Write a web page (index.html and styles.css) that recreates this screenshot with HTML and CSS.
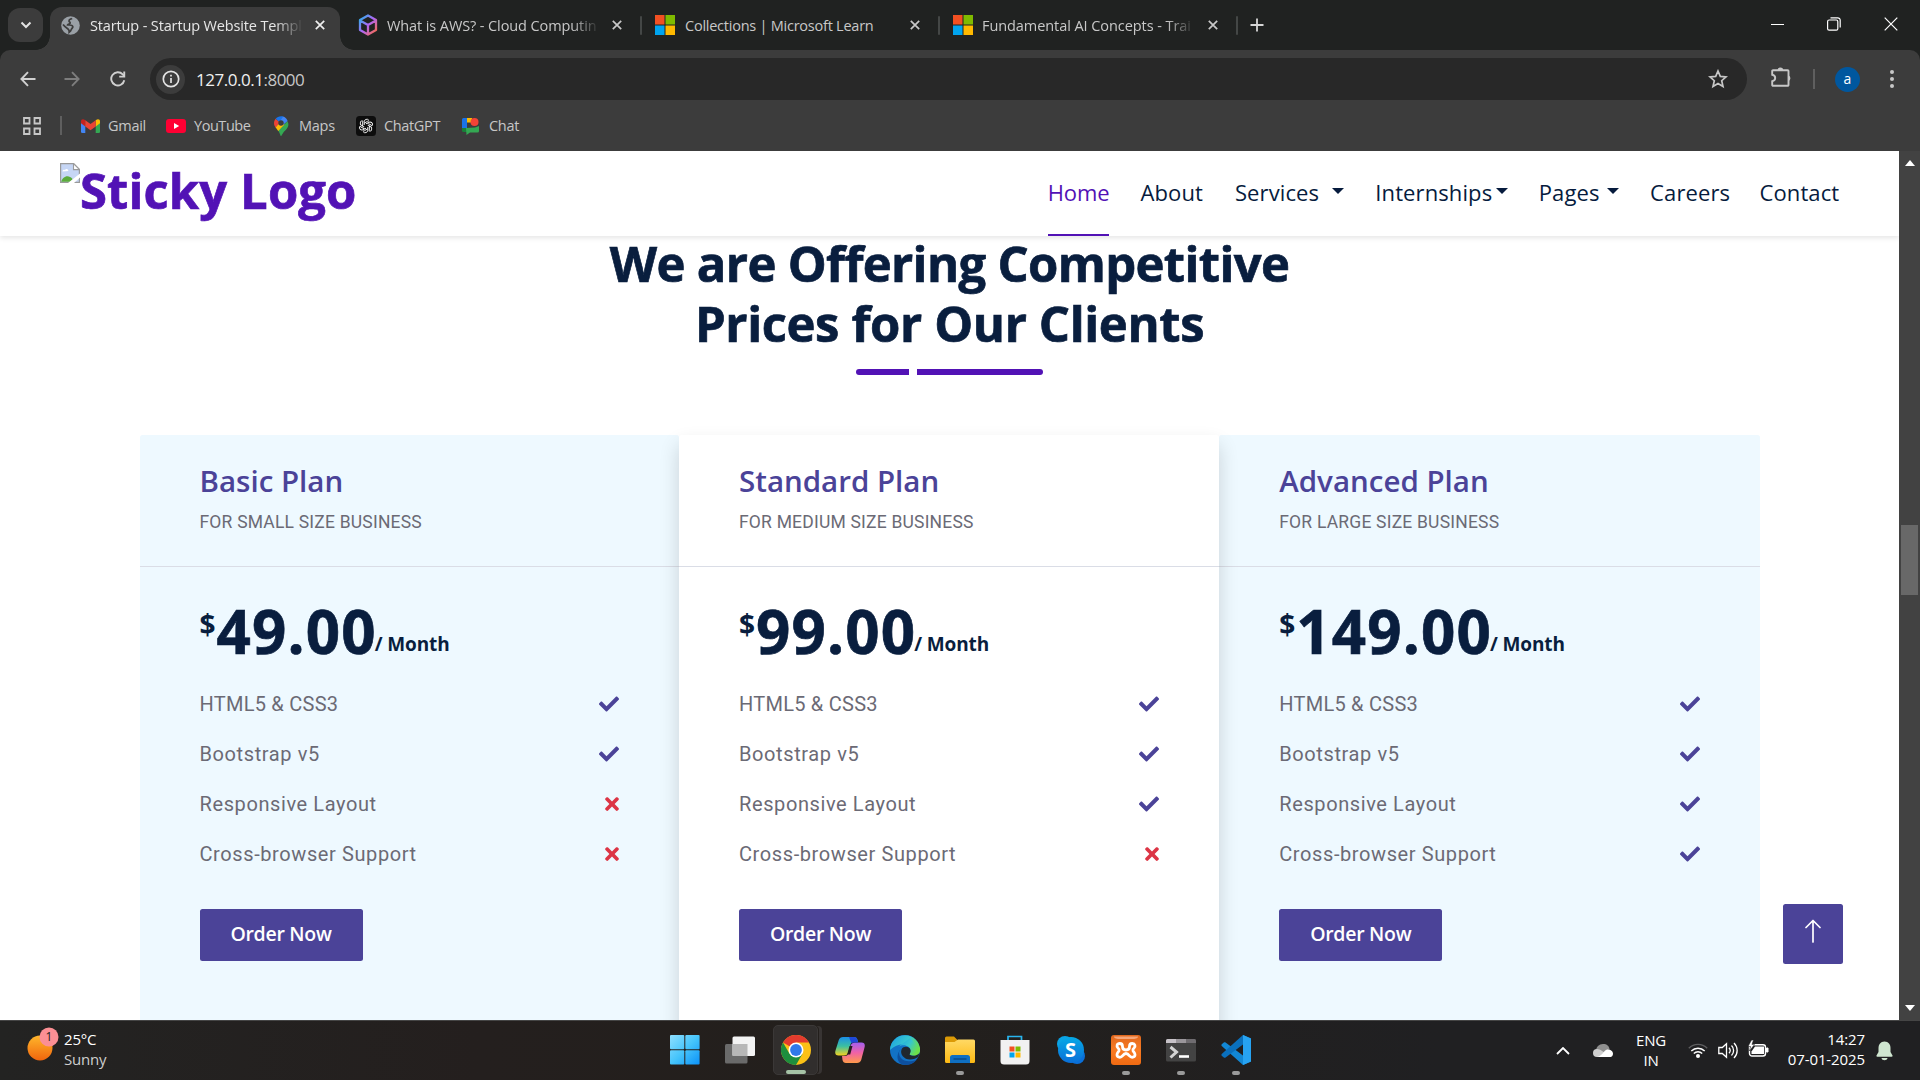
FILE: index.html
```
<!DOCTYPE html>
<html lang="en">
<head>
<meta charset="utf-8">
<title>Startup - Startup Website Template</title>
<link rel="stylesheet" href="styles.css">
</head>
<body>
<svg class="defs" width="0" height="0" aria-hidden="true">
  <defs>
    <linearGradient id="gAws" x1="0" y1="0" x2="1" y2="1"><stop offset="0" stop-color="#1fb6e8"/><stop offset=".5" stop-color="#b066f5"/><stop offset="1" stop-color="#ff6a3d"/></linearGradient>
    <linearGradient id="gWin" x1="0" y1="0" x2="30" y2="30" gradientUnits="userSpaceOnUse"><stop offset="0" stop-color="#8fdfff"/><stop offset=".5" stop-color="#45c4fb"/><stop offset="1" stop-color="#0a90f8"/></linearGradient>
    <linearGradient id="gEdgeTop" x1="0" y1="0" x2="1" y2=".5"><stop offset="0" stop-color="#1b9de2"/><stop offset=".55" stop-color="#36c6d0"/><stop offset="1" stop-color="#6be04a"/></linearGradient>
    <linearGradient id="gFolder" x1="0" y1="0" x2="0" y2="1"><stop offset="0" stop-color="#ffd965"/><stop offset="1" stop-color="#fdb913"/></linearGradient>
    <linearGradient id="gCopA" x1="0" y1="0" x2="0" y2="1"><stop offset="0" stop-color="#1a8fe8"/><stop offset=".5" stop-color="#3cc0a0"/><stop offset="1" stop-color="#f4d21f"/></linearGradient>
    <linearGradient id="gCopB" x1="0" y1="0" x2="0" y2="1"><stop offset="0" stop-color="#a25ff0"/><stop offset=".5" stop-color="#f062a6"/><stop offset="1" stop-color="#ff9a4a"/></linearGradient>
    <linearGradient id="gSky" x1="0" y1="0" x2="0" y2="1"><stop offset="0" stop-color="#06a9e6"/><stop offset="1" stop-color="#0a6fd8"/></linearGradient>
    <linearGradient id="gXam" x1="0" y1="0" x2="0" y2="1"><stop offset="0" stop-color="#e0671d"/><stop offset=".5" stop-color="#f97b23"/><stop offset="1" stop-color="#ef6a12"/></linearGradient>
    <linearGradient id="gSun" x1="0" y1="0" x2="0" y2="1"><stop offset="0" stop-color="#ffb72b"/><stop offset="1" stop-color="#f0650d"/></linearGradient>
    <symbol id="check" viewBox="0 0 512 512"><path d="M173.898 439.404l-166.4-166.4c-9.997-9.997-9.997-26.206 0-36.204l36.203-36.204c9.997-9.998 26.207-9.998 36.204 0L192 312.69 432.095 72.596c9.997-9.997 26.207-9.997 36.204 0l36.203 36.204c9.997 9.997 9.997 26.206 0 36.204l-294.4 294.401c-9.998 9.997-26.207 9.997-36.204-.001z"/></symbol>
    <symbol id="times" viewBox="0 0 352 512"><path d="M242.72 256l100.07-100.07c12.28-12.28 12.28-32.19 0-44.48l-22.24-22.24c-12.28-12.28-32.19-12.28-44.48 0L176 189.28 75.93 89.21c-12.28-12.28-32.19-12.28-44.48 0L9.21 111.45c-12.28 12.28-12.28 32.19 0 44.48L109.28 256 9.21 356.07c-12.28 12.28-12.28 32.19 0 44.48l22.24 22.24c12.28 12.28 32.2 12.28 44.48 0L176 322.72l100.07 100.07c12.28 12.28 32.2 12.28 44.48 0l22.24-22.24c12.28-12.28 12.28-32.19 0-44.48L242.72 256z"/></symbol>
    <symbol id="close" viewBox="0 0 10 10"><path d="M.8 .8L9.2 9.2M9.2 .8L.8 9.2" stroke="currentColor" stroke-width="1.7" fill="none"/></symbol>
    <symbol id="ms" viewBox="0 0 20 20"><path fill="#f25022" d="M0 0h9.5v9.5H0z"/><path fill="#7fba00" d="M10.5 0H20v9.5h-9.500z"/><path fill="#00a4ef" d="M0 10.500h9.500V20H0z"/><path fill="#ffb900" d="M10.500 10.500H20V20h-9.500z"/></symbol>
  </defs>
</svg>

<header class="browser">
  <div class="tabbar">
    <button class="tab-search"><svg width="12" height="8" viewBox="0 0 12 8"><path d="M1.500 1.500L6 6l4.500-4.500" fill="none" stroke="#e3e3e3" stroke-width="2"/></svg></button>
    <div class="tab tab-active">
      <svg class="fav" width="19" height="19" viewBox="0 0 19 19"><circle cx="9.500" cy="9.500" r="9.300" fill="#9aa0a6"/><path d="M11 2.300c-1 1-3 .8-3 2.600 0 1.300 1.200 1 1.200 2 0 1.200-2 .8-2.600 2 1.500.3 4.600-.4 5.200 1.500.4 1.600-1.300 2-1.600 3.300-.2 1.200-.9 2-2 2.600.3-1.700-.2-2.600-1.400-3.500C5 11.500 3.500 10.500 2 8.500" fill="none" stroke="#3c3c3c" stroke-width="1.700"/></svg>
      <span class="tab-title t1">Startup - Startup Website Templ</span>
      <svg class="x" width="10" height="10"><use href="#close"/></svg>
    </div>
    <div class="tab tab-aws">
      <svg class="fav" width="20" height="22" viewBox="0 0 20 22"><path d="M10 1.500l8 4.500v10l-8 4.500L2 16V6zM2 6.500l8 4.500 8-4.500M10 11v9" fill="none" stroke="url(#gAws)" stroke-width="2.300" stroke-linejoin="round"/></svg>
      <span class="tab-title t2">What is AWS? - Cloud Computin</span>
      <svg class="x" width="10" height="10"><use href="#close"/></svg>
    </div>
    <div class="tab tab-sep">
      <svg class="fav" width="20" height="20"><use href="#ms"/></svg>
      <span class="tab-title t3">Collections | Microsoft Learn</span>
      <svg class="x" width="10" height="10"><use href="#close"/></svg>
    </div>
    <div class="tab tab-sep">
      <svg class="fav" width="20" height="20"><use href="#ms"/></svg>
      <span class="tab-title t4">Fundamental AI Concepts - Trai</span>
      <svg class="x" width="10" height="10"><use href="#close"/></svg>
    </div>
    <div class="new-tab"><svg width="14" height="14" viewBox="0 0 14 14"><path d="M7 .5v13M.5 7h13" stroke="#d6d6d6" stroke-width="1.800"/></svg></div>
    <div class="win-controls">
      <svg width="13" height="14" viewBox="0 0 13 14"><path d="M0 7.500h13" stroke="#fff" stroke-width="1"/></svg>
      <svg width="14" height="14" viewBox="0 0 14 14"><rect x=".6" y="3" width="10.200" height="10.200" rx="1.500" fill="none" stroke="#fff" stroke-width="1.200"/><path d="M3.500 .8h7.200a2.500 2.500 0 0 1 2.500 2.500v7.200" fill="none" stroke="#fff" stroke-width="1.200"/></svg>
      <svg width="14" height="14" viewBox="0 0 14 14"><path d="M.7 .7l12.600 12.600M13.300 .7L.7 13.300" stroke="#fff" stroke-width="1.200"/></svg>
    </div>
  </div>

  <div class="toolbar">
    <svg class="tb-back" width="16" height="16" viewBox="0 0 16 16"><path d="M15.500 8H1.500M8 1.200L1.400 8 8 14.800" fill="none" stroke="#d0d0d0" stroke-width="1.900"/></svg>
    <svg class="tb-fwd" width="16" height="16" viewBox="0 0 16 16"><path d="M.5 8h14M8 1.200L14.600 8 8 14.800" fill="none" stroke="#7d7d7d" stroke-width="1.900"/></svg>
    <svg class="tb-reload" width="16" height="16" viewBox="0 0 16 16"><path d="M14.300 9.300A6.600 6.600 0 1 1 12.700 3.400L14.300 5" fill="none" stroke="#d0d0d0" stroke-width="1.900"/><path d="M15.200 .6v6H9.200V4.700h4.100V.6z" fill="#d0d0d0"/></svg>
    <div class="omnibox">
      <span class="info"><svg width="18" height="18" viewBox="0 0 18 18"><circle cx="9" cy="9" r="7.700" fill="none" stroke="#e3e3e3" stroke-width="1.700"/><path d="M9 8v5M9 4.800v1.800" stroke="#e3e3e3" stroke-width="1.700"/></svg></span>
      <span class="url">127.0.0.1<span class="port">:8000</span></span>
      <svg class="star" width="20" height="20" viewBox="0 0 20 20"><path d="M10 2l2.300 5.400 5.700.5-4.300 3.800 1.300 5.700-5-3-5 3 1.300-5.700L2 7.900l5.700-.5z" fill="none" stroke="#c7c7c7" stroke-width="1.700"/></svg>
    </div>
    <svg class="ext" width="21" height="21" viewBox="0 0 21 21"><path d="M2 3.200h14.700a.8.800 0 0 1 .8.800v14a.8.800 0 0 1-.8.800H2a.8.800 0 0 1-.8-.8v-3.800c4-.8 4-5.600 0-6.400V4a.8.800 0 0 1 .8-.8z" fill="none" stroke="#c7c7c7" stroke-width="1.900"/><path d="M6.600 3a2.800 2.600 0 0 1 5.600 0zM17.500 8.500a2.600 2.800 0 0 1 0 5.400z" fill="#c7c7c7"/></svg>
    <span class="tb-sep"></span>
    <span class="avatar">a</span>
    <svg class="dots" width="4" height="18" viewBox="0 0 4 18"><g fill="#c7c7c7"><circle cx="2" cy="2" r="2"/><circle cx="2" cy="9" r="2"/><circle cx="2" cy="16" r="2"/></g></svg>
  </div>

  <div class="bookmarks">
    <svg class="apps" width="18" height="18" viewBox="0 0 18 18"><path d="M1 1h5.500v5.500H1zM11.500 1H17v5.500h-5.500zM1 11.500h5.500V17H1zM11.500 11.500H17V17h-5.500z" fill="none" stroke="#c7c7c7" stroke-width="1.800"/></svg>
    <span class="bm-sep"></span>
    <span class="bm b1"><svg width="19" height="14" viewBox="0 0 19 14"><path fill="#4285f4" d="M0 2.500l4.300 3V14H1.300A1.300 1.300 0 0 1 0 12.700z"/><path fill="#34a853" d="M19 2.500l-4.300 3V14h3a1.300 1.300 0 0 0 1.300-1.300z"/><path fill="#fbbc04" d="M14.700 1.200C17 -.6 19 .3 19 2.200v2l-4.300 3.200z"/><path fill="#c5221f" d="M4.300 1.200C2 -.6 0 .3 0 2.200v2l4.300 3.200z"/><path fill="#ea4335" d="M4.300 1.200l5.200 3.900 5.200-3.900v6.200L9.500 11.200 4.300 7.400z"/></svg>Gmail</span>
    <span class="bm b2"><svg width="20" height="14" viewBox="0 0 20 14"><rect width="20" height="14" rx="3" fill="#f03"/><path d="M8 4l5.200 3L8 10z" fill="#fff"/></svg>YouTube</span>
    <span class="bm b3"><svg width="16" height="20" viewBox="0 0 16 20"><path fill="#34a853" d="M8 20c-.7 0-.8-2.700-3-5.500l9.500-9.300c1.700 3 .9 5.800-1.300 8.200C9.500 16.500 8.700 20 8 20z"/><path fill="#fbbc04" d="M2.500 11.300L7 6l4.500 2.500-6.300 6.600c-1-1.500-1.800-2.500-2.700-3.800z"/><path fill="#4285f4" d="M4.500 3.500L10 .5c2 .5 3.700 2 4.600 4.600L10 9z"/><path fill="#ea4335" d="M2.600 2.700L7 6.500l-4.500 4.900C.3 8.500.7 5 2.600 2.700z"/><path fill="#1a73e8" d="M2.600 2.700C4.300.6 7.500-.4 10.200.6L6.500 5.900z"/><circle cx="8" cy="7" r="2.700" fill="#3c3c3c"/></svg>Maps</span>
    <span class="bm b4"><svg width="20" height="20" viewBox="0 0 20 20"><rect width="20" height="20" rx="3.500" fill="#0d0d0d"/><g fill="none" stroke="#fff" stroke-width=".9"><path id="p" d="M8.200 9V5.800a2.600 2.600 0 0 1 4.600-1.600M8.200 7.200L11.500 5.300a2.600 2.600 0 0 1 1.600-.3"/><use href="#p" transform="rotate(60 10 10)"/><use href="#p" transform="rotate(120 10 10)"/><use href="#p" transform="rotate(180 10 10)"/><use href="#p" transform="rotate(240 10 10)"/><use href="#p" transform="rotate(300 10 10)"/></g></svg>ChatGPT</span>
    <span class="bm b5"><svg width="17" height="19" viewBox="0 0 17 19"><path fill="#1a73e8" d="M1.500 2H5v10H0V3.500A1.500 1.500 0 0 1 1.500 2z"/><path fill="#fbbc04" d="M5 2h5v4.500H5z"/><path fill="#188038" d="M0 12h5v4H1.500A1.500 1.500 0 0 1 0 14.500z"/><path fill="#34a853" d="M4 12l9-.5L17 10v5a1.500 1.500 0 0 1-1.500 1.500H8L4.500 19z"/><circle cx="12.500" cy="6" r="4" fill="#f44336"/></svg>Chat</span>
  </div>
</header>

<div class="viewport">
  <main class="page">
    <nav class="navbar">
      <a class="brand"><svg class="broken" width="20" height="20" viewBox="0 0 20 20"><path d="M.6 .6h13l5.800 5.800v13H.6z" fill="#c6d6f5" stroke="#9a9a9a" stroke-width="1.200"/><path d="M2.500 8.500c0-2 2-2 2.400-1.400C6 5 8.500 6 8.300 8z" fill="#fff"/><path d="M1.200 18.800c1.500-5 7-8 11.500-2.500l-2.300 2.500z" fill="#5cac3c"/><path d="M13.500 .6v6h6z" fill="#fff" stroke="#9a9a9a" stroke-width="1.100"/><path d="M8 20L20 10.500V14.500L14 20z" fill="#fff"/></svg><span>Sticky Logo</span></a>
      <div class="links">
        <a class="active">Home</a><a>About</a><a class="drop">Services</a><a class="drop">Internships</a><a class="drop">Pages</a><a>Careers</a><a>Contact</a>
      </div>
    </nav>

    <section class="pricing">
      <h1>We are Offering Competitive<br><span class="line2">Prices for Our Clients</span></h1>
      <div class="rule"></div>
      <div class="plans">
        <article class="plan">
          <header><h2>Basic Plan</h2><small>FOR SMALL SIZE BUSINESS</small></header>
          <div class="body">
            <div class="price"><span class="cur">$</span><span class="num">49.00</span><span class="per">/ Month</span></div>
            <ul>
              <li>HTML5 &amp; CSS3<svg class="yes"><use href="#check"/></svg></li>
              <li>Bootstrap v5<svg class="yes"><use href="#check"/></svg></li>
              <li>Responsive Layout<svg class="no"><use href="#times"/></svg></li>
              <li>Cross-browser Support<svg class="no"><use href="#times"/></svg></li>
            </ul>
            <a class="btn">Order Now</a>
          </div>
        </article>
        <article class="plan featured">
          <header><h2>Standard Plan</h2><small>FOR MEDIUM SIZE BUSINESS</small></header>
          <div class="body">
            <div class="price"><span class="cur">$</span><span class="num">99.00</span><span class="per">/ Month</span></div>
            <ul>
              <li>HTML5 &amp; CSS3<svg class="yes"><use href="#check"/></svg></li>
              <li>Bootstrap v5<svg class="yes"><use href="#check"/></svg></li>
              <li>Responsive Layout<svg class="yes"><use href="#check"/></svg></li>
              <li>Cross-browser Support<svg class="no"><use href="#times"/></svg></li>
            </ul>
            <a class="btn">Order Now</a>
          </div>
        </article>
        <article class="plan">
          <header><h2>Advanced Plan</h2><small>FOR LARGE SIZE BUSINESS</small></header>
          <div class="body">
            <div class="price"><span class="cur">$</span><span class="num">149.00</span><span class="per">/ Month</span></div>
            <ul>
              <li>HTML5 &amp; CSS3<svg class="yes"><use href="#check"/></svg></li>
              <li>Bootstrap v5<svg class="yes"><use href="#check"/></svg></li>
              <li>Responsive Layout<svg class="yes"><use href="#check"/></svg></li>
              <li>Cross-browser Support<svg class="yes"><use href="#check"/></svg></li>
            </ul>
            <a class="btn">Order Now</a>
          </div>
        </article>
      </div>
    </section>
    <a class="to-top"><svg width="16" height="24" viewBox="0 0 16 24"><path d="M8 23V1.500M1 8.500l7-7 7 7" fill="none" stroke="#fff" stroke-width="1.700" stroke-linecap="round" stroke-linejoin="round"/></svg></a>
  </main>
  <div class="scrollbar">
    <svg width="10" height="6" viewBox="0 0 10 6"><path d="M5 0l5 6H0z" fill="#fff"/></svg>
    <div class="thumb"></div>
    <svg class="down" width="10" height="6" viewBox="0 0 10 6"><path d="M5 6l5-6H0z" fill="#fff"/></svg>
  </div>
</div>

<footer class="taskbar">
  <div class="weather">
    <svg width="32" height="36" viewBox="0 0 32 36"><circle cx="13" cy="21" r="12.500" fill="url(#gSun)"/><circle cx="22" cy="10" r="9.500" fill="#fb8f94"/></svg>
    <span class="badge">1</span>
    <div class="wtext"><span>25°C</span><span class="cond">Sunny</span></div>
  </div>
  <div class="apps-row">
    <span class="app"><svg width="30" height="30" viewBox="0 0 30 30"><g fill="url(#gWin)"><rect width="14.300" height="14.300" rx="1"/><rect x="15.300" width="14.300" height="14.300" rx="1"/><rect y="15.300" width="14.300" height="14.300" rx="1"/><rect x="15.300" y="15.300" width="14.300" height="14.300" rx="1"/></g></svg></span>
    <span class="app"><svg width="30" height="30" viewBox="0 0 30 30"><rect y="9" width="22.500" height="19.500" rx="1.500" fill="#6a6a6a"/><rect x="7.500" y="1.500" width="22.500" height="19.500" rx="1.500" fill="#f3f3f3"/><path d="M7.500 9h15v12h-15z" fill="#b7b7b7"/></svg></span>
    <span class="app current"><svg width="30" height="30" viewBox="0 0 30 30"><circle cx="15" cy="15" r="15" fill="#fbc116"/><path d="M15 15L2 7.500A15 15 0 0 1 28 7.500H15z" fill="#e33b2e"/><path d="M2 7.500A15 15 0 0 0 15 30l6.500-11.200L15 15 8.500 18.700z" fill="#1e8e3e"/><circle cx="15" cy="15" r="7.500" fill="#fff"/><circle cx="15" cy="15" r="5.900" fill="#3079ea"/></svg><i class="mark wide"></i></span>
    <span class="app"><svg width="30" height="28" viewBox="0 0 30 28"><path d="M8 1h11c2 0 3 1 3.500 3l.5 2h-4.500c-2 0-2.700 1-3.200 3l-2 7c-.8 2.500-2 3.500-4.300 3.500H3.500C.5 19.500-.3 17.500.5 14.500L3.800 4C4.500 2 6 1 8 1z" fill="url(#gCopA)"/><path d="M22 27H11c-2 0-3-1-3.500-3L7 20h3c2 0 3-1 3.500-3l2-7c.7-2.300 2-3.500 4.300-3.500h6.700c3 0 3.800 2 3 5L26.200 24c-.7 2-2.200 3-4.200 3z" fill="url(#gCopB)"/><path d="M14 1h5c2 0 3 1 3.500 3l.5 2.500h-4.200c-1 0-1.800.3-2.300 1z" fill="#1f48d8"/><path d="M14.500 10h3l-2.300 8.500h-3z" fill="#221f1e"/></svg></span>
    <span class="app"><svg width="30" height="30" viewBox="0 0 30 30"><circle cx="15" cy="15" r="15" fill="#1272c6"/><path d="M9 17c0 7 6 12 17.800 7.700A15 15 0 0 1 15 30C7 29.500 5 20 11 14z" fill="#0d4f9e"/><path d="M0 15A15 15 0 0 1 30 15.500c0 4.500-5 6.500-9.500 4.500-2-1 .3-2 .3-4.500C20.500 9 9 6.500 0 15z" fill="url(#gEdgeTop)"/><path d="M30 16c-.5 5-8.500 6-10.500 3.200 0 0 1.500-1.200 1.300-3.700-.5-3.800-6.800-5.300-9.200-1.300-2 5 2.500 10.300 8.400 10.300 3.500 0 6.500-1.500 8.300-2.500z" fill="#221f1e" opacity=".9"/><path d="M20.800 15.500C21 12 14 8 8 12l12-9 10 10c.5 5-5.500 8-10.300 6.200.8-.8 1.200-2 1.100-3.700z" fill="url(#gEdgeTop)"/></svg></span>
    <span class="app"><svg width="30" height="28" viewBox="0 0 30 28"><path d="M0 2a1.500 1.500 0 0 1 1.500-1.500H9L12.500 4v5H0z" fill="#dc9a06"/><path d="M0 6h9.500L13 3.500h15.500A1.500 1.500 0 0 1 30 5v20.500a1.500 1.500 0 0 1-1.500 1.500h-27A1.500 1.500 0 0 1 0 25.500z" fill="url(#gFolder)"/><path d="M5 27v-5.500a2.500 2.500 0 0 1 2.500-2.500h15a2.500 2.500 0 0 1 2.500 2.500V27z" fill="#0f6fc2"/><path d="M8.500 23h13" stroke="#0a4a86" stroke-width="1.400"/></svg><i class="mark"></i></span>
    <span class="app"><svg width="30" height="30" viewBox="0 0 30 30"><path d="M8 7V1.500h13.500V7" fill="none" stroke="#29b5ee" stroke-width="1.700"/><path d="M.5 5h29v21a3.500 3.500 0 0 1-3.500 3.500H4A3.500 3.500 0 0 1 .5 26z" fill="#f1f1f1"/><path fill="#f25022" d="M9.500 11.500h5v5h-5z"/><path fill="#7fba00" d="M15.500 11.500h5v5h-5z"/><path fill="#00a4ef" d="M9.500 17.500h5v5h-5z"/><path fill="#ffb900" d="M15.500 17.500h5v5h-5z"/></svg></span>
    <span class="app"><svg width="30" height="30" viewBox="0 0 30 30"><circle cx="9" cy="9" r="8" fill="#0aa3e5"/><circle cx="21" cy="21" r="8" fill="#0a6fd8"/><circle cx="15" cy="15" r="13" fill="url(#gSky)"/></svg><b class="skype">S</b></span>
    <span class="app"><svg width="30" height="30" viewBox="0 0 30 30"><rect width="30" height="30" rx="3" fill="url(#gXam)"/><path d="M3 1.500h24c0 2-3 2.500-6 2.500H9C6 4 3 3.500 3 1.500z" fill="#f6a77a"/><path d="M8.800 8.500c-3 0-3.600 2.800-1.800 4.500 1.200 1 1.500 1.500 1 2.800-.5 1.200-2 2-2 4 0 2.700 3.800 3.400 5.500 1 1-1.300 1.800-2.300 3.500-2.300s2.500 1 3.500 2.300c1.700 2.400 5.500 1.700 5.500-1 0-2-1.500-2.800-2-4-.5-1.300-.2-1.800 1-2.800 1.800-1.700 1.200-4.500-1.800-4.500-2.200 0-2.700 1.500-2.700 3 0 2-1.300 3.500-3.500 3.500s-3.500-1.500-3.500-3.500c0-1.500-.5-3-2.700-3z" fill="none" stroke="#fff" stroke-width="2.800" stroke-linejoin="round"/></svg><i class="mark"></i></span>
    <span class="app"><svg width="30" height="23" viewBox="0 0 30 23"><rect width="30" height="22.500" rx="1.500" fill="#434343"/><path d="M0 4V1.500A1.500 1.500 0 0 1 1.500 0H10v4z" fill="#c7c2c8"/><path d="M10 0h10v4H10z" fill="#9a969b"/><path d="M20 0h8.500A1.500 1.500 0 0 1 30 1.500V4H20z" fill="#6f6c70"/><path d="M4.500 8l6 5-6 5.500" fill="none" stroke="#d4d4d4" stroke-width="3"/><path d="M13 17.500h10" stroke="#fff" stroke-width="2.600"/></svg><i class="mark"></i></span>
    <span class="app"><svg width="30" height="30" viewBox="0 0 30 30"><path d="M22 0l8 3.500v23L22 30 1 11.300c-.8-.8-.8-1.500 0-2.300l1.800-1.500c.6-.4 1.200-.4 1.800 0L22 20.500z" fill="#1287d4"/><path d="M22 0v9.500L4.600 22.500c-.6.400-1.200.4-1.800 0L1 21c-.8-.8-.8-1.500 0-2.300z" fill="#0a70bd"/><path d="M22 0l8 3.500v23L22 30z" fill="#27a3f2"/></svg><i class="mark"></i></span>
  </div>
  <div class="tray">
    <svg class="t-chev" width="14" height="8" viewBox="0 0 14 8"><path d="M1 7l6-6 6 6" fill="none" stroke="#fff" stroke-width="1.800"/></svg>
    <svg class="t-cloud" width="20" height="13" viewBox="0 0 20 13"><path d="M3 7C3 3 6 0 10 0s6 2 6.500 5l-8 5z" fill="#8f8f8f"/><path d="M4 13a4 4 0 0 1 0-8c3 0 7 3 10 6l-1 2z" fill="#cfcfcf"/><path d="M4 13c5-1 6-5 9-7 3-1.500 7 .5 7 3.500S18 13 16.500 13z" fill="#fff"/></svg>
    <div class="lang"><span>ENG</span><span>IN</span></div>
    <svg class="t-wifi" width="20" height="15" viewBox="0 0 20 15"><g fill="none" stroke-width="1.400"><path d="M.8 5.200a13 13 0 0 1 18.400 0" stroke="#5e5e60"/><path d="M3.300 8a9.500 9.500 0 0 1 13.400 0M5.800 10.500a6 6 0 0 1 8.400 0" stroke="#fff"/></g><circle cx="10" cy="13" r="2" fill="#fff"/></svg>
    <svg class="t-vol" width="20" height="17" viewBox="0 0 20 17"><g fill="none" stroke="#fff" stroke-width="1.300"><path d="M.8 5.500h3.500L8.500 1.700v13.600L4.300 11.500H.8z"/><path d="M11 5.800a4 4 0 0 1 0 5.400M13.500 3.500a7 7 0 0 1 0 10"/><path d="M16 1a10.500 10.500 0 0 1 0 15"/></g></svg>
    <svg class="t-bat" width="21" height="17" viewBox="0 0 21 17"><rect x="1.500" y="4.700" width="16" height="11.300" rx="2.500" fill="none" stroke="#fff" stroke-width="1.400"/><path d="M7 6.500h9V14H3.500v-2.500z" fill="#fff"/><path d="M18.500 8h1.500v4h-1.500z" fill="#fff" stroke="#fff"/><path d="M3.500 0L0 6.500h2.500L1.500 11 6.500 4.500H4L5.500 0z" fill="#fff" stroke="#202022" stroke-width=".6"/></svg>
    <div class="clock"><span>14:27</span><span>07-01-2025</span></div>
    <svg class="t-bell" width="17" height="20" viewBox="0 0 17 20"><path d="M8.500 .5c4 0 6 3 6 6.500v4l2 3.500c.3.700 0 1.200-.8 1.200H1.300c-.8 0-1.100-.5-.8-1.200L2.500 11V7c0-3.500 2-6.500 6-6.500z" fill="#cfe6d0"/><path d="M5.500 17h6c-.3 3-5.700 3-6 0z" fill="#cfe6d0"/></svg>
  </div>
</footer>
</body>
</html>
```
FILE: styles.css
```
* { box-sizing: border-box; }
body { margin: 0; width: 1920px; height: 1080px; overflow: hidden; display: flex; flex-direction: column; background: #fff; font-family: "Open Sans", sans-serif; }
svg { display: block; flex: none; }
.defs { position: absolute; }

/* Browser chrome */
.browser { height: 151px; background: #202221; flex: none; }
.tabbar { height: 50px; display: flex; align-items: flex-end; padding-left: 8px; }
.tab-search { width: 35px; height: 34px; margin: 0 7px 8px 0; border: 0; padding: 0; border-radius: 12px; background: #3c3c3c; display: flex; align-items: center; justify-content: center; position: relative; z-index: 1; }
.tab { width: 298px; height: 43px; display: flex; align-items: center; padding-bottom: 7px; color: #c8c8c8; position: relative; }
.tab-active { width: 290px; background: #3c3c3c; border-radius: 12px 12px 0 0; color: #e6e6e6; padding-left: 11px; }
.tab-active::before, .tab-active::after { content: ""; position: absolute; bottom: 0; width: 14px; height: 14px; }
.tab-active::before { left: -14px; background: radial-gradient(circle at 0 0, #202221 13.500px, #3c3c3c 14px); }
.tab-active::after { right: -14px; background: radial-gradient(circle at 100% 0, #202221 13.500px, #3c3c3c 14px); }
.tab-aws { width: 300px; padding-left: 18px; }
.tab-sep { padding-left: 15px; }
.tab-sep::before, .new-tab::before { content: ""; position: absolute; left: 0; top: 9px; width: 2px; height: 19px; background: #444746; border-radius: 1px; }
.tab-title { font-size: 14.500px; white-space: nowrap; line-height: 20px; overflow: hidden; width: 211px; margin-left: 9px; position: relative; top: 1px; }
.t1 { letter-spacing: -.14px; margin-left: 10px; }
.t2 { letter-spacing: -.1px; margin-left: 9px; }
.t3 { letter-spacing: -.24px; margin-left: 10px; }
.t4 { letter-spacing: -.07px; margin-left: 9px; }
.t1, .t2, .t4 { -webkit-mask-image: linear-gradient(90deg, #000 185px, transparent 213px); mask-image: linear-gradient(90deg, #000 185px, transparent 213px); }
.x { margin-left: 14px; }
.tab-active .x { color: #eee; }
.tab-sep .x { margin-left: auto; margin-right: 18px; }
.new-tab { position: relative; height: 43px; width: 60px; padding: 11px 0 0 14px; margin-left: 0; }
.win-controls { display: flex; width: 127px; justify-content: space-between; margin: 0 22px 19px auto; }

.toolbar { height: 58px; background: #3c3c3c; border-radius: 10px 10px 0 0; display: flex; align-items: center; padding-left: 20px; }
.tb-fwd { margin-left: 28px; }
.tb-reload { margin-left: 30px; }
.omnibox { width: 1597px; height: 42px; margin-left: 24px; border-radius: 21px; background: #282828; display: flex; align-items: center; padding: 0 24px 0 7px; }
.info { width: 29px; height: 29px; margin-left: -1px; border-radius: 50%; background: #3c3c3c; display: flex; align-items: center; justify-content: center; }
.url { font-size: 17px; letter-spacing: -.48px; color: #f0f0f0; margin-left: 11px; line-height: 24px; position: relative; top: 1px; }
.port { color: #c7c7c7; }
.star { margin-left: auto; margin-right: -5px; }
.ext { margin-left: 24px; margin-top: -3px; }
.tb-sep { width: 2px; height: 20px; background: #5f5f5f; margin-left: 21px; }
.avatar { width: 25px; height: 25px; border-radius: 50%; background: #00579f; color: #fff; font: 500 14px/23px "Open Sans", sans-serif; text-align: center; margin-left: 20px; }
.dots { margin-left: 30px; }

.bookmarks { height: 43px; background: #3c3c3c; display: flex; align-items: center; padding: 0 0 8px 23px; }
.bm-sep { width: 2px; height: 19px; background: #5f5f5f; margin-left: 19px; }
.bm { display: flex; align-items: center; gap: 8px; font-size: 14.500px; letter-spacing: -.28px; color: #c7c7c7; line-height: 20px; white-space: nowrap; }
.b1 { margin-left: 19px; width: 85px; }
.b2 { width: 107px; letter-spacing: -.45px; }
.b3 { width: 83px; gap: 10px; }
.b4 { width: 106px; letter-spacing: -.35px; }
.b5 { gap: 10px; }

/* Web page */
.viewport { height: 869px; flex: none; display: flex; overflow: hidden; }
.page { width: 1899px; height: 869px; overflow: hidden; position: relative; background: #fff; }
.navbar { height: 85px; position: relative; z-index: 5; background: #fff; box-shadow: 0 2px 5px rgba(0,0,0,.1); display: flex; justify-content: space-between; padding: 0 60px; }
.brand { display: flex; color: #5212b5; font-size: 49px; font-weight: 700; line-height: 79px; letter-spacing: .1px; -webkit-text-stroke: .7px; }
.broken { margin-top: 12px; }
.links { display: grid; grid-template-columns: 61px 63px 109px 132px 80px 78px 80px; gap: 31.400px; font-size: 22px; font-weight: 500; color: #061b3d; }
.links a { height: 85px; line-height: 82px; white-space: nowrap; display: flex; justify-content: space-between; border-bottom: 2px solid transparent; letter-spacing: .1px; text-indent: .5px; }
.links .active { color: #5212b5; border-color: #5212b5; letter-spacing: -.1px; text-indent: 0; }
.drop::after { content: ""; border: 6px solid transparent; border-top-color: #061b3d; border-bottom: 0; height: 0; margin-top: 37px; margin-right: -1px; }

.pricing { width: 1620px; margin: -3px auto 0; }
h1 { margin: 0; text-align: center; color: #091e3e; font-size: 49px; font-weight: 700; line-height: 60px; letter-spacing: -.66px; -webkit-text-stroke: .7px; }
.line2 { letter-spacing: -.38px; }
.rule { width: 187px; height: 6px; border-radius: 3px; margin: 16px auto 60px; background: linear-gradient(90deg, #5212b5 53px, #fff 53px, #fff 61px, #5212b5 61px); }
.plans { display: grid; grid-template-columns: 539.500px 540.250px 540.250px; }
.plan { height: 640px; background: #eef9ff; border-radius: 2.500px; }
.featured { background: #fff; position: relative; box-shadow: 0 10px 20px rgba(0,0,0,.16); }
.plan header { height: 132px; border-bottom: 1px solid #dadde6; padding: 28px 60px 0; }
h2 { margin: 0; font-size: 29.500px; font-weight: 600; line-height: 36px; letter-spacing: 0; color: #4b4398; }
small { display: block; font: 400 17.500px/26px Roboto, sans-serif; letter-spacing: .2px; margin-top: 10px; color: #6b6a75; }
.body { padding: 28px 60px 0; }
.price { display: flex; align-items: baseline; color: #091e3e; line-height: 72px; height: 72px; font-weight: 700; }
.cur { font-size: 28px; line-height: 28px; font-weight: 700; align-self: flex-start; margin-top: 15px; width: 17px; }
.num { font-size: 60px; letter-spacing: 1.200px; -webkit-text-stroke: .7px; }
.per { font-size: 19px; letter-spacing: -.15px; margin-left: -2px; position: relative; top: -3px; }
ul { list-style: none; margin: 22px 0 0; padding: 0 0 20px; }
li { display: flex; justify-content: space-between; align-items: center; height: 30px; margin-bottom: 20px; font: 400 20px/30px Roboto, sans-serif; letter-spacing: .6px; color: #6b6a75; }
li:first-child { letter-spacing: .25px; }
.yes { width: 20px; height: 20px; fill: #4b4398; }
.no { width: 14px; height: 20px; fill: #dc3545; }
.btn { display: block; width: 163px; height: 52px; border-radius: 2.500px; background: #4b4398; color: #fff; font-size: 19.500px; font-weight: 600; line-height: 49px; letter-spacing: -.28px; text-align: center; }
.to-top { position: absolute; right: 56px; bottom: 56px; width: 60px; height: 60px; border-radius: 2.500px; background: #4b4398; display: flex; justify-content: center; padding-top: 15px; }

.scrollbar { width: 21px; background: #424242; display: flex; flex-direction: column; align-items: center; padding: 9px 0 9px; }
.thumb { width: 17px; height: 70px; margin-top: 359px; background: #686868; }
.down { margin-top: auto; }

/* Windows taskbar */
.taskbar { height: 60px; flex: none; border-top: 1px solid #454545; background: linear-gradient(90deg, #232322, #241f1e 25%, #231f1c 45%, #202022 75%, #202022); display: flex; color: #fff; position: relative; }
.weather { width: 660px; display: flex; padding: 6px 0 0 27px; position: relative; }
.badge { position: absolute; left: 43px; top: 7px; width: 12px; font-size: 12px; line-height: 18px; text-align: center; color: #221f1e; }
.wtext { display: flex; flex-direction: column; font-size: 15px; line-height: 20px; margin: 2px 0 0 5px; letter-spacing: -.2px; }
.cond { color: #cfcfcf; }
.apps-row { display: flex; padding-top: 4px; }
.app { width: 50px; height: 50px; margin-right: 5.100px; display: flex; align-items: center; justify-content: center; position: relative; }
.current { border: 1px solid #3b3837; border-radius: 5px; background: #312e2d; box-shadow: 2px 0 0 -1px #231f1c, 5px 0 0 -1px #383433; width: 45px; margin-left: 3px; margin-right: 7px; }
.mark { position: absolute; bottom: 0; left: 50%; width: 8px; height: 4px; margin-left: -4px; border-radius: 2px; background: #9a9a9a; }
.wide { width: 20px; margin-left: -10px; background: #a6c3a6; }
.skype { position: absolute; left: 0; width: 50px; text-align: center; font-size: 20px; line-height: 24px; }
.tray { position: absolute; right: 0; top: 0; width: 364px; height: 59px; display: flex; align-items: center; font-size: 15px; line-height: 20px; }
.t-cloud { margin-left: 23px; }
.lang { display: flex; flex-direction: column; align-items: center; width: 28px; margin-left: 24px; margin-top: -2px; letter-spacing: -.2px; }
.t-wifi { margin-left: 23px; }
.t-vol { margin-left: 10px; }
.t-bat { margin-left: 10px; margin-top: -4px; }
.clock { display: flex; flex-direction: column; align-items: flex-end; width: 80px; margin-left: 16px; margin-top: -3px; letter-spacing: -.1px; }
.t-bell { margin-left: 11px; }
```
